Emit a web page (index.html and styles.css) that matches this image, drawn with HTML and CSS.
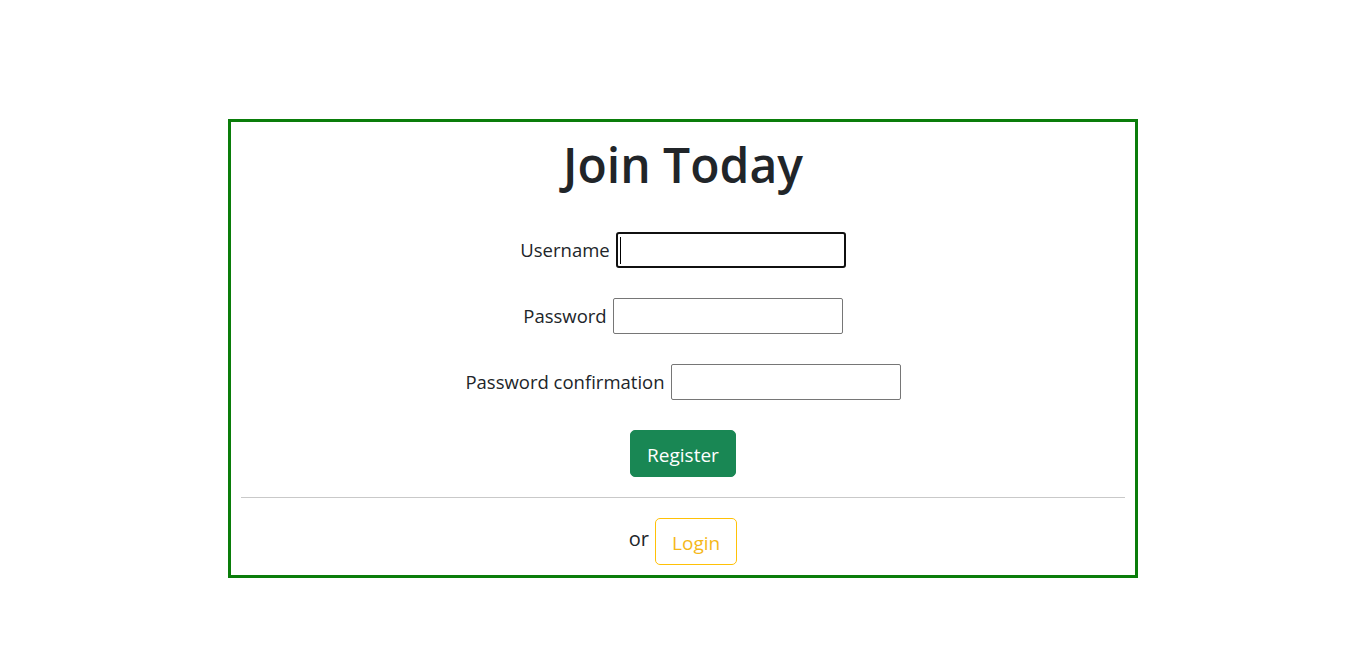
FILE: index.html
```html
<!DOCTYPE html>
<html lang="en">
<head>
<meta charset="utf-8">
<title>Join Today</title>
<link rel="stylesheet" href="styles.css">
</head>
<body>
<main class="page">
  <section class="card">
    <h1 class="title">Join Today</h1>
    <form class="form">
      <div class="row">
        <label class="label" for="username">Username</label>
        <span class="caret-wrap"><input class="field field-focus" id="username" type="text"></span>
      </div>
      <div class="row">
        <label class="label" for="password">Password</label>
        <input class="field" id="password" type="password">
      </div>
      <div class="row">
        <label class="label" for="password2">Password confirmation</label>
        <input class="field" id="password2" type="password">
      </div>
      <div class="actions">
        <button class="btn btn-success" type="button">Register</button>
      </div>
    </form>
    <hr class="divider">
    <div class="alt">
      <span class="or">or</span>
      <a class="btn btn-outline-warning" href="#">Login</a>
    </div>
  </section>
</main>
</body>
</html>
```

FILE: styles.css
```css
* { box-sizing: border-box; }

html, body {
  margin: 0;
  padding: 0;
  background: #fff;
}

body {
  font-family: "Open Sans", "Noto Sans", sans-serif;
  font-size: 20px;
  line-height: 1.5;
  color: #212529;
}

.page {
  padding-top: 119px;
}

.card {
  width: 66.6667%;
  margin: 0 auto;
  border: 3px solid #0a7d0a;
  padding: 0 10px 10px;
  display: flex;
  flex-direction: column;
  align-items: center;
}

.title {
  margin: 14px 0 0;
  font-size: 48px;
  font-weight: 600;
  line-height: 1.2;
  color: #212529;
}

.form {
  display: flex;
  flex-direction: column;
  align-items: center;
  gap: 30px;
  margin-top: 38px;
}

.row {
  display: flex;
  align-items: center;
  gap: 6px;
}

.label {
  font-size: 18.5px;
}

.field {
  width: 230px;
  height: 36px;
  border: 1px solid #767676;
  border-radius: 2px;
  padding: 1px 2px;
  font: inherit;
  background: #fff;
}

.field-focus {
  border: 2px solid #101010;
  border-radius: 3px;
  outline: none;
}

.caret-wrap {
  position: relative;
  display: block;
}

.caret-wrap::after {
  content: "";
  position: absolute;
  left: 4px;
  top: 5px;
  width: 1px;
  height: 27px;
  background: #000;
}

.actions {
  display: flex;
  justify-content: center;
}

.btn {
  display: inline-block;
  font-family: inherit;
  font-size: 19px;
  line-height: 29px;
  padding: 10px 16px 6px;
  border-radius: 5px;
  border: 1px solid transparent;
  text-decoration: none;
  cursor: pointer;
}

.btn-success {
  background: #198754;
  border-color: #198754;
  color: #fff;
}

.btn-outline-warning {
  background: #fff;
  border-color: #ffc107;
  color: #f5b819;
}

.divider {
  align-self: stretch;
  margin: 20px 0 20px;
  border: 0;
  border-top: 1px solid #c9c9c9;
}

.alt {
  display: flex;
  align-items: center;
  gap: 6px;
}

.or {
  position: relative;
  top: -2px;
}
```
